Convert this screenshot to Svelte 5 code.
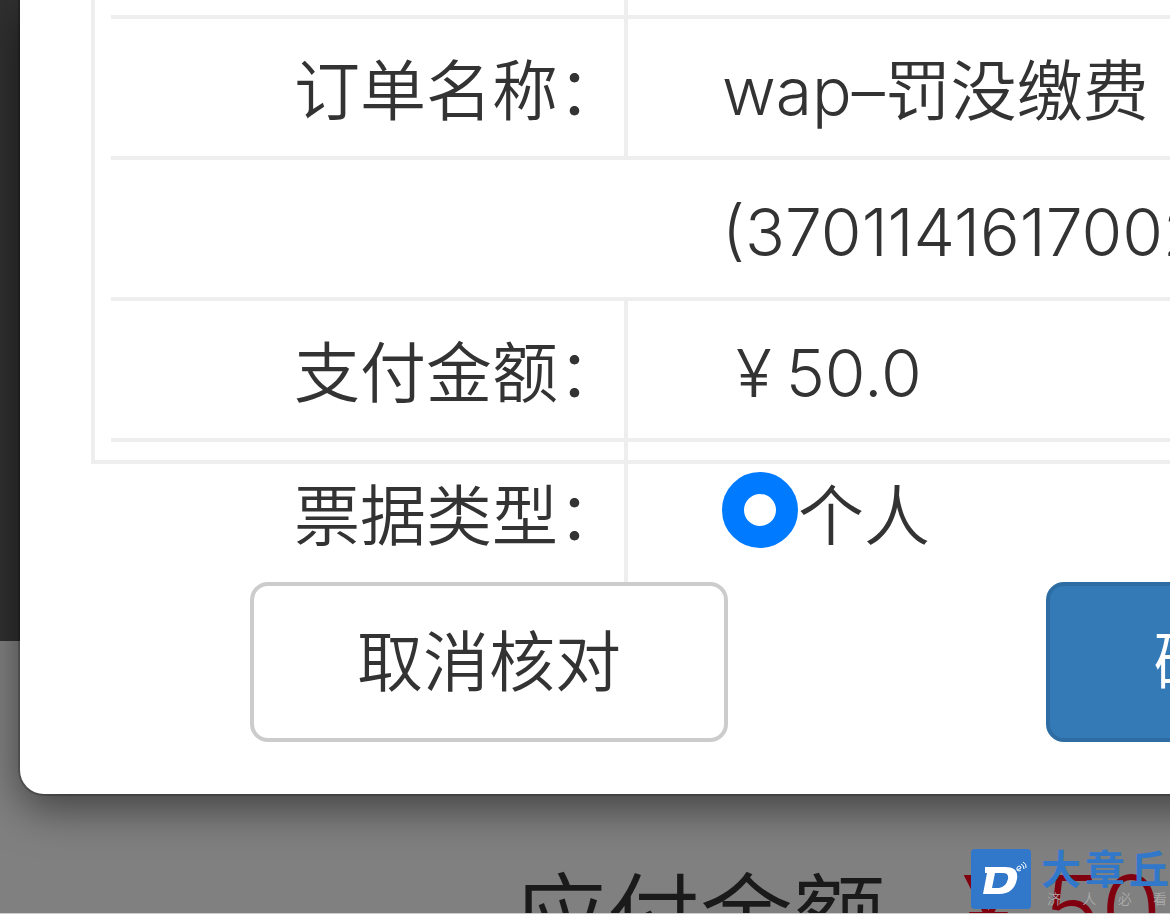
<script>
  const rows = [
    { label: "订单名称：", value: "wap–罚没缴费" },
    { label: "", value: "(3701141617002", wide: true },
    { label: "支付金额：", value: "50.0", money: true },
  ];

  let invoiceType = $state("personal");
</script>

<div class="page">
  <div class="banner"></div>
  <div class="summary">
    <span>应付金额</span>
    <span class="price"><span>¥</span><span>50.00</span></span>
  </div>

  <div class="modal" role="dialog" aria-label="订单核对">
    <div class="panel">
      <table>
        <tbody>
          <tr class="cut"><td class="label"></td><td></td></tr>
          {#each rows as row}
            <tr>
              <td class="label" class:wide={row.wide}>{row.label}</td>
              <td class:money={row.money}>
                {#if row.money}<span class="yen">¥</span>{/if}{row.value}
              </td>
            </tr>
          {/each}
          <tr class="last">
            <td class="label">票据类型：</td>
            <td>
              <label class="choice">
                <input type="radio" name="invoice" value="personal" bind:group={invoiceType} />
                <span>个人</span>
              </label>
            </td>
          </tr>
        </tbody>
      </table>
    </div>
    <div class="actions">
      <button type="button">取消核对</button>
      <button type="button" class="primary">确认支付</button>
    </div>
  </div>

  <div class="watermark">
    <svg width="60" height="60" viewBox="0 0 60 60" aria-hidden="true">
      <rect width="60" height="60" rx="4" fill="#3178ca" />
      <path
        fill="#fff"
        fill-rule="evenodd"
        d="M14 18H34Q48 18 46 30Q43 45 28 45H12L16 24H24L21 39H28Q35 38 37 30Q38 24 32 24H14Z"
      />
      <g fill="none" stroke="#fff" stroke-width="1">
        <path d="M46 21l4-2q0-2-2-2-3 1-2 4 2 2 4 0" />
        <path d="M50 15q3 1 3 5M52 13q4 2 3 6" />
      </g>
    </svg>
    <div class="brand">
      <div class="name"><span>大</span><span>章</span><span>丘</span></div>
      <div class="slogan"><span>济</span><span>人</span><span>必</span><span>看</span></div>
    </div>
  </div>
</div>

<style>
  :global(body) {
    margin: 0;
  }

  .page {
    position: relative;
    display: flex;
    flex-direction: column;
    box-sizing: border-box;
    height: 100vh;
    overflow: hidden;
    border-bottom: 1px solid #ccc;
    background: #808080;
    color: #333;
    font-family: Inter, "Noto Sans CJK SC", sans-serif;
    font-size: 66px;
    font-weight: 350;
    line-height: 96px;
  }

  .banner {
    flex: 0 0 641px;
    background: #303030;
  }

  .summary {
    display: flex;
    align-items: flex-start;
    gap: 76px;
    padding: 216px 0 0 514px;
    color: #1a1a1a;
    font-size: 93px;
    line-height: 120px;
    white-space: nowrap;
  }

  .price {
    display: flex;
    gap: 28px;
    color: #800010;
    font-size: 98px;
    line-height: 108px;
  }

  /* the dialog runs past the right edge of the window */
  .modal {
    position: absolute;
    top: 0;
    left: 20px;
    box-sizing: border-box;
    width: calc(100% + 400px);
    padding: 0 0 52px 71px;
    border-radius: 0 0 24px 24px;
    background: #fff;
    box-shadow: 0 0 0 2px rgba(0, 0, 0, 0.2), 0 14px 44px rgba(0, 0, 0, 0.5);
  }

  .panel {
    box-sizing: border-box;
    height: 464px;
    margin-bottom: 118px;
    padding-left: 16px;
    border: 4px solid #eee;
    border-width: 0 0 4px 4px;
  }

  table {
    width: 100%;
    table-layout: fixed;
    border-spacing: 0;
  }

  td {
    box-sizing: border-box;
    height: 141px;
    padding: 6px 0 0 94px;
    border-bottom: 4px solid #eee;
    white-space: nowrap;
  }

  .label {
    width: 517px;
    padding-left: 0;
    border-right: 4px solid #eee;
    text-align: right;
  }

  .label.wide {
    border-right: 0;
  }

  .cut td {
    height: 19px;
    padding-top: 0;
  }

  .last td {
    border-bottom: 0;
  }

  .money {
    padding-left: 108px;
  }

  .yen {
    margin-right: 14px;
  }

  .choice {
    display: flex;
    align-items: center;
  }

  input {
    appearance: none;
    box-sizing: border-box;
    width: 76px;
    height: 76px;
    margin: 0 0 12px;
    border: 22px solid #007aff;
    border-radius: 50%;
    background: #fff;
  }

  .actions {
    position: relative;
    display: flex;
    gap: 318px;
    padding-left: 159px;
  }

  button {
    flex: none;
    padding: 28px 103px;
    border: 4px solid #ccc;
    border-radius: 18px;
    background: #fff;
    color: #333;
    font: inherit;
  }

  .primary {
    border-color: #2e6da4;
    background: #337ab7;
    color: #fff;
  }

  .watermark {
    position: absolute;
    right: 1px;
    bottom: 4px;
    display: flex;
    gap: 10px;
  }

  .name {
    display: flex;
    gap: 4px;
    color: #3178ca;
    font-size: 40px;
    font-weight: 700;
    line-height: 42px;
  }

  .slogan {
    display: flex;
    justify-content: space-between;
    padding: 0 2px 0 6px;
    color: #aaa;
    font-size: 14px;
    line-height: 16px;
  }
</style>
